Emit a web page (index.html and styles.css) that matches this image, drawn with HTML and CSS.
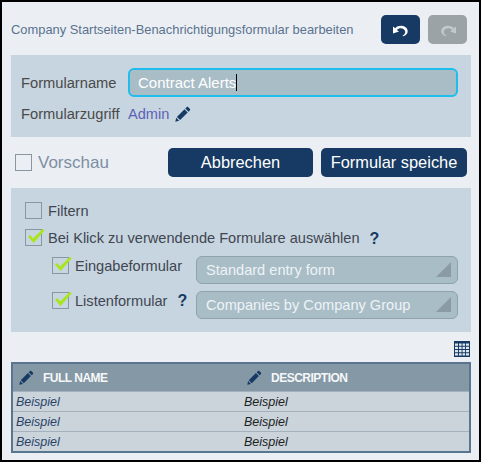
FILE: index.html
```html
<!DOCTYPE html>
<html lang="en">
<head>
    <meta charset="UTF-8">
    <title>Formular bearbeiten</title>
    <link rel="stylesheet" href="styles.css">
</head>
<body>
    <svg class="defs" width="0" height="0">
        <symbol id="pencil" viewBox="0 0 16 16">
            <path d="M11.6 1.2c.5-.5 1.2-.5 1.7 0l1.500 1.500c.5.5.5 1.200 0 1.700l-1.300 1.300-3.200-3.200zM9.500 3.300l3.200 3.200-7.600 7.600-3.200-3.200zM1.200 11.800l3 3-3.900 1z"/>
        </symbol>
        <symbol id="check" viewBox="0 0 17 14">
            <path d="M0 7.500l2.300-1.500 2.700 3.500L14.800 0l2 1.200L5.500 14z"/>
        </symbol>
        <symbol id="undo" viewBox="0 0 18 14">
            <path d="M1 10.500V3.500l2.200 1.700C5 3.300 7.300 2.600 9.700 2.800c3.500.3 6 2.700 6 5.400 0 2.300-1.700 4.300-4.500 5-.5.1-.8-.5-.3-.7 1.500-.8 2.500-2.300 2.300-3.900-.2-2-2.300-3.300-4.400-3.300-1.500 0-2.900.6-4 1.600l2.200 1.700z"/>
        </symbol>
    </svg>

    <div class="frame">
        <div class="top">
            <span class="title">Company Startseiten-Benachrichtigungsformular bearbeiten</span>
            <div class="history">
                <button class="icon-btn"><svg class="undo" width="18" height="14"><use href="#undo"/></svg></button>
                <button class="icon-btn disabled"><svg class="undo redo" width="18" height="14"><use href="#undo"/></svg></button>
            </div>
        </div>

        <div class="panel name-panel">
            <div class="row">
                <label class="name-label">Formularname</label>
                <div class="name-input">Contract Alerts<span class="caret"></span></div>
            </div>
            <div class="row access">
                <label class="name-label">Formularzugriff</label>
                <a href="#" class="link">Admin</a>
                <svg class="pencil" width="16" height="16"><use href="#pencil"/></svg>
            </div>
        </div>

        <div class="actions">
            <div class="preview"><span class="box"></span>Vorschau</div>
            <button class="btn cancel">Abbrechen</button>
            <button class="btn save">Formular speiche</button>
        </div>

        <div class="panel options">
            <div class="opt"><span class="box"></span>Filtern</div>
            <div class="opt second">
                <span class="box"><svg class="tick" width="17" height="14"><use href="#check"/></svg></span>
                Bei Klick zu verwendende Formulare auswählen
                <span class="help">?</span>
            </div>
            <div class="sub">
                <div class="sub-label">
                    <span class="box"><svg class="tick" width="17" height="14"><use href="#check"/></svg></span>
                    Eingabeformular
                </div>
                <div class="select">Standard entry form<span class="arrow"></span></div>
            </div>
            <div class="sub">
                <div class="sub-label">
                    <span class="box"><svg class="tick" width="17" height="14"><use href="#check"/></svg></span>
                    Listenformular
                    <span class="help">?</span>
                </div>
                <div class="select">Companies by Company Group<span class="arrow"></span></div>
            </div>
        </div>

        <div class="grid-tool">
            <svg width="16" height="16" viewBox="0 0 16 16">
                <rect width="16" height="16" fill="#163a63"/>
                <path d="M1 2.500h3v2.200H1zM5 2.500h2.600v2.200H5zM8.500 2.500h2.600v2.200H8.500zM12 2.500h3v2.200h-3zM1 5.800h3V8H1zM5 5.800h2.600V8H5zM8.500 5.800h2.600V8H8.500zM12 5.800h3V8h-3zM1 9h3v2.200H1zM5 9h2.600v2.200H5zM8.500 9h2.600v2.200H8.500zM12 9h3v2.200h-3zM1 12.300h3v2.200H1zM5 12.300h2.600v2.200H5zM8.500 12.300h2.600v2.200H8.500zM12 12.300h3v2.200h-3z" fill="#dfe6ee"/>
            </svg>
        </div>

        <table class="sample">
            <thead>
                <tr>
                    <th><svg class="pencil" width="15" height="15"><use href="#pencil"/></svg>FULL NAME</th>
                    <th><svg class="pencil" width="15" height="15"><use href="#pencil"/></svg>DESCRIPTION</th>
                </tr>
            </thead>
            <tbody>
                <tr><td class="blue">Beispiel</td><td>Beispiel</td></tr>
                <tr><td class="blue">Beispiel</td><td>Beispiel</td></tr>
                <tr><td class="blue">Beispiel</td><td>Beispiel</td></tr>
            </tbody>
        </table>
    </div>
</body>
</html>
```

FILE: styles.css
```css
body {
    margin: 0;
    background: #fff;
    font-family: "Liberation Sans", Arial, sans-serif;
    overflow: hidden;
}
.defs {
    position: absolute;
}
.frame {
    width: 481px;
    height: 462px;
    box-sizing: border-box;
    border: 2px solid #000;
    background: #ebeff3;
    padding: 13px 8px 0 9px;
}
.top {
    display: flex;
    align-items: center;
    justify-content: space-between;
    height: 29px;
    padding-right: 4px;
    margin-bottom: 11px;
}
.title {
    font-size: 12.900px;
    color: #5a7290;
    white-space: nowrap;
}
.history {
    display: flex;
    gap: 8px;
}
.icon-btn {
    width: 39px;
    height: 29px;
    border: none;
    border-radius: 5px;
    background: #163a63;
    padding: 0;
    display: flex;
    align-items: center;
    justify-content: center;
}
.icon-btn.disabled {
    background: #9ca3a7;
}
.undo {
    fill: #fff;
}
.redo {
    fill: #c2c8cb;
    transform: scaleX(-1);
}
.panel {
    background: #c7d5e0;
    color: #3f4650;
    font-size: 14.600px;
}
.name-panel {
    height: 82px;
    box-sizing: border-box;
    padding: 13px 13px 0 10px;
}
.row {
    display: flex;
    align-items: center;
}
.name-label {
    color: #4a4a4a;
    width: 107px;
    flex: none;
    font-size: 14.700px;
}
.name-input {
    flex: 1;
    height: 29px;
    box-sizing: border-box;
    border: 2px solid #1fbdec;
    border-radius: 6px;
    background: #a9bdc7;
    color: #fff;
    font-size: 15px;
    line-height: 25px;
    padding-left: 8px;
}
.caret {
    display: inline-block;
    width: 1px;
    height: 17px;
    background: #000;
    vertical-align: -3px;
}
.access {
    margin-top: 7px;
    height: 20px;
}
.link {
    color: #5c62b5;
    text-decoration: none;
    margin-right: 6px;
}
.pencil {
    fill: #163a63;
    flex: none;
}
.actions {
    display: flex;
    align-items: center;
    height: 29px;
    margin: 11px 4px 11px 0;
    gap: 8px;
}
.preview {
    display: flex;
    align-items: center;
    font-size: 17px;
    color: #7d8ea3;
    flex: 1;
    padding-left: 4px;
}
.box {
    width: 15px;
    height: 15px;
    border: 1px solid #8a97a3;
    flex: none;
    margin-right: 6px;
    position: relative;
}
.btn {
    height: 29px;
    border: none;
    border-radius: 5px;
    background: #163a63;
    color: #fff;
    font-family: inherit;
    font-size: 16.400px;
    padding: 0;
    white-space: nowrap;
    overflow: hidden;
}
.cancel {
    width: 145px;
}
.save {
    width: 146px;
}
.options {
    height: 144px;
    box-sizing: border-box;
    padding: 14px 13px 0 14px;
}
.opt {
    display: flex;
    align-items: flex-start;
    height: 17px;
    line-height: 19px;
}
.second {
    margin-top: 10px;
}
.tick {
    position: absolute;
    left: 2px;
    top: -1px;
    fill: #a8e619;
}
.help {
    color: #163a63;
    font-weight: bold;
    font-size: 16px;
    margin-left: 10px;
}
.sub {
    display: flex;
    align-items: center;
    justify-content: space-between;
    margin-top: 10px;
    padding-left: 27px;
}
.sub + .sub {
    margin-top: 7px;
}
.sub-label {
    display: flex;
    align-items: center;
    margin-top: -9px;
}
.select {
    width: 262px;
    height: 28px;
    box-sizing: border-box;
    border: 1px solid #8fa2ae;
    border-radius: 6px;
    background: #a9bdc7;
    color: #eef3f6;
    line-height: 26px;
    padding-left: 9px;
    position: relative;
}
.arrow {
    position: absolute;
    right: 6px;
    bottom: 6px;
    width: 0;
    height: 0;
    border-style: solid;
    border-width: 0 0 15px 15px;
    border-color: transparent transparent #8a9aa6 transparent;
}
.grid-tool {
    display: flex;
    justify-content: flex-end;
    height: 30px;
    padding-top: 9px;
    box-sizing: border-box;
    padding-right: 1px;
}
.sample {
    width: 460px;
    height: 91px;
    border-collapse: collapse;
    border: 2px solid #5a7590;
    table-layout: fixed;
    font-size: 12.500px;
}
.sample th {
    background: #8498a6;
    color: #f5f7f8;
    height: 27px;
    padding: 0 0 0 6px;
    text-align: left;
    font-size: 12px;
    letter-spacing: -0.5px;
    white-space: nowrap;
}
.sample th .pencil {
    vertical-align: -3px;
    margin-right: 9px;
}
.sample td {
    background: #ccd4db;
    color: #1c1f24;
    font-style: italic;
    height: 19px;
    padding: 0 0 0 3px;
    border-top: 1px solid #a3b1bc;
}
.sample td.blue {
    color: #2a4468;
}
```
